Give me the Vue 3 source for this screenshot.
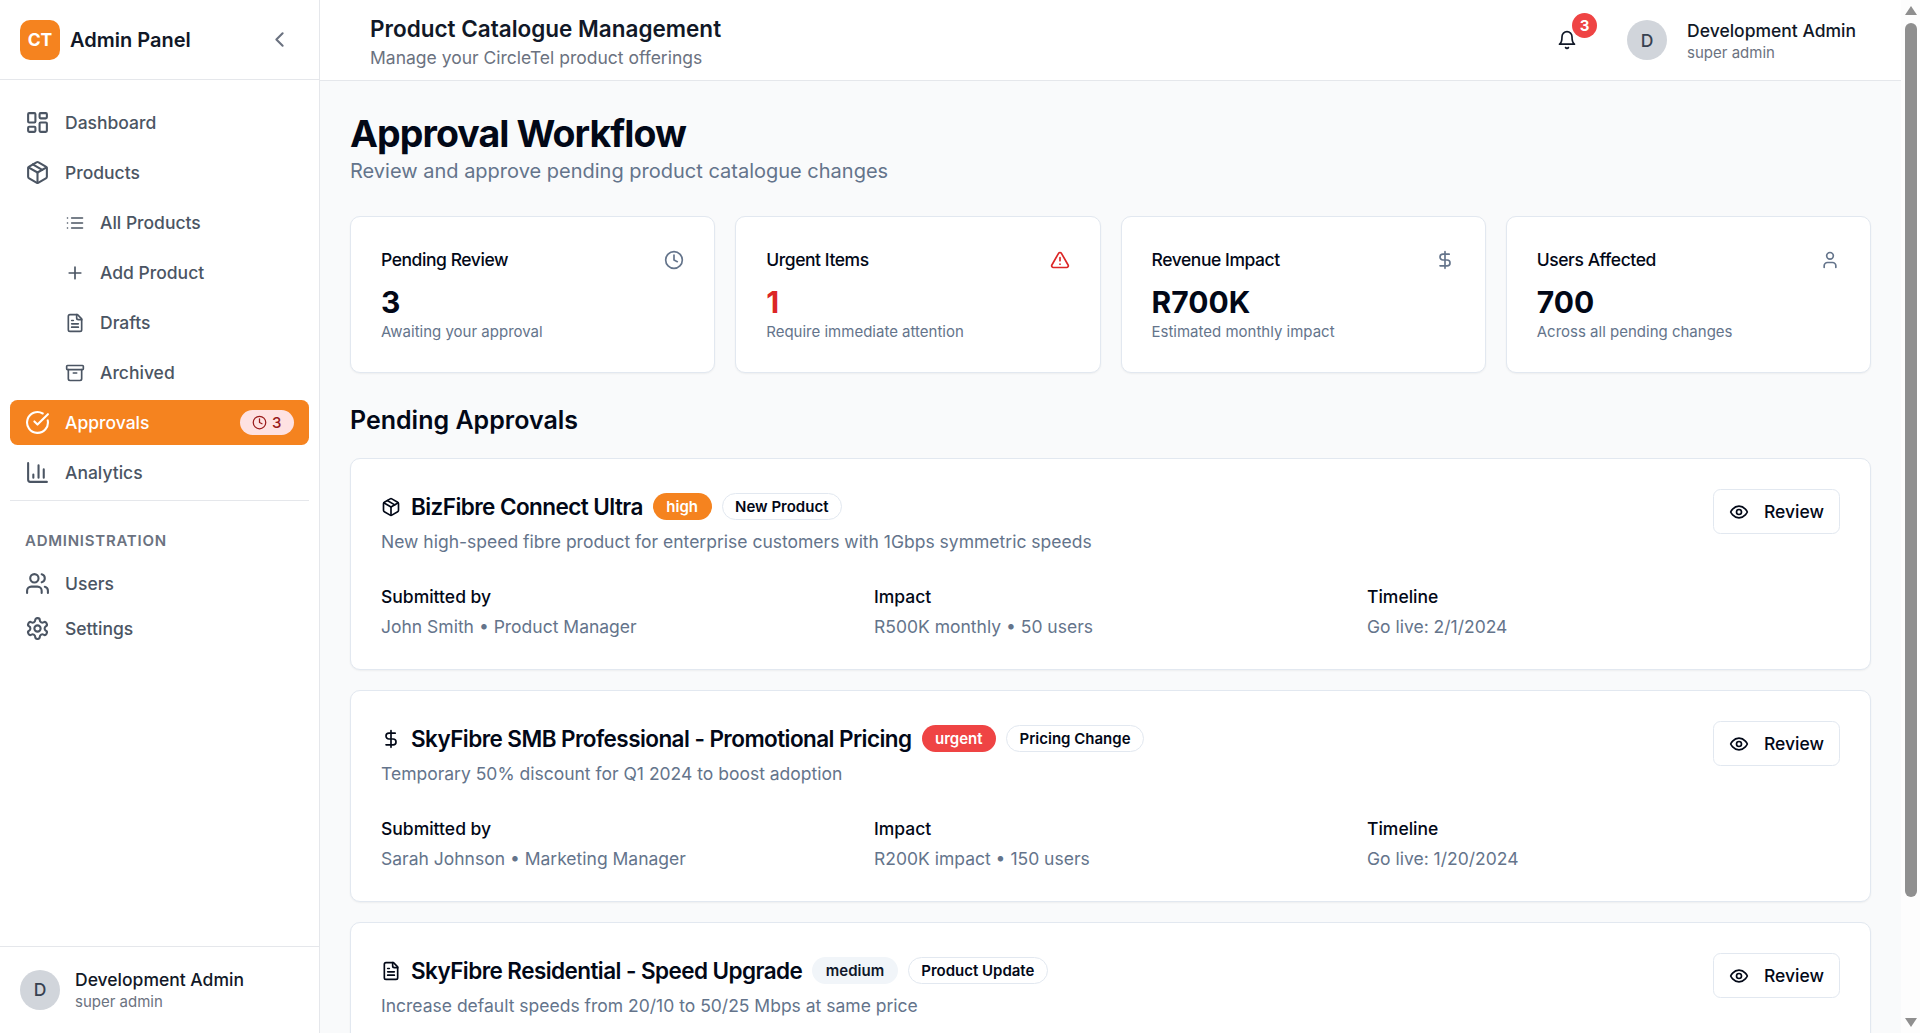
<script setup>
import { h } from 'vue'

const ICONS = {
  dashboard: '<rect x="3" y="3" width="7" height="9" rx="1"/><rect x="14" y="3" width="7" height="5" rx="1"/><rect x="14" y="12" width="7" height="9" rx="1"/><rect x="3" y="16" width="7" height="5" rx="1"/>',
  package: '<path d="m7.5 4.27 9 5.15"/><path d="M21 8a2 2 0 0 0-1-1.73l-7-4a2 2 0 0 0-2 0l-7 4A2 2 0 0 0 3 8v8a2 2 0 0 0 1 1.73l7 4a2 2 0 0 0 2 0l7-4A2 2 0 0 0 21 16Z"/><path d="m3.3 7 8.7 5 8.7-5"/><path d="M12 22V12"/>',
  list: '<path d="M3 12h.01M3 18h.01M3 6h.01M8 12h13M8 18h13M8 6h13"/>',
  plus: '<path d="M5 12h14M12 5v14"/>',
  file: '<path d="M15 2H6a2 2 0 0 0-2 2v16a2 2 0 0 0 2 2h12a2 2 0 0 0 2-2V7Z"/><path d="M14 2v4a2 2 0 0 0 2 2h4"/><path d="M10 9H8M16 13H8M16 17H8"/>',
  archive: '<rect x="2" y="3" width="20" height="5" rx="1"/><path d="M4 8v11a2 2 0 0 0 2 2h12a2 2 0 0 0 2-2V8"/><path d="M10 12h4"/>',
  check: '<path d="M21.801 10A10 10 0 1 1 17 3.335"/><path d="m9 11 3 3L22 4"/>',
  chart: '<path d="M3 3v16a2 2 0 0 0 2 2h16"/><path d="M18 17V9M13 17V5M8 17v-3"/>',
  users: '<path d="M16 21v-2a4 4 0 0 0-4-4H6a4 4 0 0 0-4 4v2"/><circle cx="9" cy="7" r="4"/><path d="M22 21v-2a4 4 0 0 0-3-3.87"/><path d="M16 3.13a4 4 0 0 1 0 7.75"/>',
  settings: '<path d="M12.22 2h-.44a2 2 0 0 0-2 2v.18a2 2 0 0 1-1 1.73l-.43.25a2 2 0 0 1-2 0l-.15-.08a2 2 0 0 0-2.73.73l-.22.38a2 2 0 0 0 .73 2.73l.15.1a2 2 0 0 1 1 1.72v.51a2 2 0 0 1-1 1.74l-.15.09a2 2 0 0 0-.73 2.73l.22.38a2 2 0 0 0 2.73.73l.15-.08a2 2 0 0 1 2 0l.43.25a2 2 0 0 1 1 1.73V20a2 2 0 0 0 2 2h.44a2 2 0 0 0 2-2v-.18a2 2 0 0 1 1-1.73l.43-.25a2 2 0 0 1 2 0l.15.08a2 2 0 0 0 2.73-.73l.22-.39a2 2 0 0 0-.73-2.73l-.15-.08a2 2 0 0 1-1-1.74v-.5a2 2 0 0 1 1-1.74l.15-.09a2 2 0 0 0 .73-2.73l-.22-.38a2 2 0 0 0-2.73-.73l-.15.08a2 2 0 0 1-2 0l-.43-.25a2 2 0 0 1-1-1.73V4a2 2 0 0 0-2-2z"/><circle cx="12" cy="12" r="3"/>',
  clock: '<circle cx="12" cy="12" r="10"/><path d="M12 6v6l4 2"/>',
  alert: '<path d="m21.73 18-8-14a2 2 0 0 0-3.48 0l-8 14A2 2 0 0 0 4 21h16a2 2 0 0 0 1.73-3"/><path d="M12 9v4M12 17h.01"/>',
  dollar: '<path d="M12 2v20"/><path d="M17 5H9.5a3.5 3.5 0 0 0 0 7h5a3.5 3.5 0 0 1 0 7H6"/>',
  user: '<path d="M19 21v-2a4 4 0 0 0-4-4H9a4 4 0 0 0-4 4v2"/><circle cx="12" cy="7" r="4"/>',
  eye: '<path d="M2 12s3-7 10-7 10 7 10 7-3 7-10 7-10-7-10-7Z"/><circle cx="12" cy="12" r="3"/>',
  bell: '<path d="M6 8a6 6 0 0 1 12 0c0 7 3 9 3 9H3s3-2 3-9"/><path d="M10.3 21a1.94 1.94 0 0 0 3.4 0"/>',
  chevron: '<path d="m15 18-6-6 6-6"/>'
}

const Icon = (props) =>
  h('svg', {
    width: props.size || 20,
    height: props.size || 20,
    viewBox: '0 0 24 24',
    fill: 'none',
    stroke: props.color || 'currentColor',
    'stroke-width': 2,
    'stroke-linecap': 'round',
    'stroke-linejoin': 'round',
    style: 'flex:none;display:block',
    innerHTML: ICONS[props.name]
  })
Icon.props = ['name', 'size', 'color']

const navMain = [
  { label: 'Dashboard', icon: 'dashboard' },
  { label: 'Products', icon: 'package' },
  { label: 'All Products', icon: 'list', sub: true },
  { label: 'Add Product', icon: 'plus', sub: true },
  { label: 'Drafts', icon: 'file', sub: true },
  { label: 'Archived', icon: 'archive', sub: true },
  { label: 'Approvals', icon: 'check', active: true, badge: '3' },
  { label: 'Analytics', icon: 'chart' }
]
const navAdmin = [
  { label: 'Users', icon: 'users' },
  { label: 'Settings', icon: 'settings' }
]
const stats = [
  { label: 'Pending Review', value: '3', sub: 'Awaiting your approval', icon: 'clock', color: '#64748b' },
  { label: 'Urgent Items', value: '1', sub: 'Require immediate attention', icon: 'alert', color: '#dc2626', red: true },
  { label: 'Revenue Impact', value: 'R700K', sub: 'Estimated monthly impact', icon: 'dollar', color: '#64748b' },
  { label: 'Users Affected', value: '700', sub: 'Across all pending changes', icon: 'user', color: '#64748b' }
]
const approvals = [
  {
    icon: 'package', title: 'BizFibre Connect Ultra', priority: 'high', type: 'New Product',
    desc: 'New high-speed fibre product for enterprise customers with 1Gbps symmetric speeds',
    by: 'John Smith • Product Manager', impact: 'R500K monthly • 50 users', timeline: 'Go live: 2/1/2024'
  },
  {
    icon: 'dollar', title: 'SkyFibre SMB Professional - Promotional Pricing', priority: 'urgent', type: 'Pricing Change',
    desc: 'Temporary 50% discount for Q1 2024 to boost adoption',
    by: 'Sarah Johnson • Marketing Manager', impact: 'R200K impact • 150 users', timeline: 'Go live: 1/20/2024'
  },
  {
    icon: 'file', title: 'SkyFibre Residential - Speed Upgrade', priority: 'medium', type: 'Product Update',
    desc: 'Increase default speeds from 20/10 to 50/25 Mbps at same price'
  }
]
</script>

<template>
  <div class="app">
    <aside class="sidebar">
      <div class="brand">
        <div class="logo">CT</div>
        <span class="brand-name">Admin Panel</span>
        <span class="collapse"><Icon name="chevron" :size="25" /></span>
      </div>
      <nav class="nav">
        <div class="nav-group">
          <a
            v-for="item in navMain"
            :key="item.label"
            class="nav-item"
            :class="{ sub: item.sub, active: item.active }"
          >
            <Icon :name="item.icon" :size="item.sub ? 20 : 25" />
            <span class="nav-label">{{ item.label }}</span>
            <span v-if="item.badge" class="nav-badge"><Icon name="clock" :size="15" />{{ item.badge }}</span>
          </a>
        </div>
        <div class="nav-admin">
          <div class="nav-heading">Administration</div>
          <a v-for="item in navAdmin" :key="item.label" class="nav-item">
            <Icon :name="item.icon" :size="25" />
            <span class="nav-label">{{ item.label }}</span>
          </a>
        </div>
      </nav>
      <div class="side-user">
        <div class="avatar">D</div>
        <div class="who">
          <div class="who-name">Development Admin</div>
          <div class="who-role">super admin</div>
        </div>
      </div>
    </aside>

    <div class="right">
      <header class="topbar">
        <div class="top-titles">
          <div class="top-title">Product Catalogue Management</div>
          <div class="top-sub">Manage your CircleTel product offerings</div>
        </div>
        <div class="top-actions">
          <div class="bell">
            <Icon name="bell" :size="20" />
            <span class="bell-badge">3</span>
          </div>
          <div class="avatar">D</div>
          <div class="who">
            <div class="who-name">Development Admin</div>
            <div class="who-role">super admin</div>
          </div>
        </div>
      </header>

      <main class="main">
        <h1 class="page-title">Approval Workflow</h1>
        <p class="page-sub">Review and approve pending product catalogue changes</p>

        <section class="stats">
          <div v-for="s in stats" :key="s.label" class="card stat">
            <div class="stat-head">
              <span class="stat-label">{{ s.label }}</span>
              <Icon :name="s.icon" :size="20" :color="s.color" />
            </div>
            <div class="stat-value" :class="{ red: s.red }">{{ s.value }}</div>
            <div class="stat-sub">{{ s.sub }}</div>
          </div>
        </section>

        <h2 class="section-title">Pending Approvals</h2>

        <section class="list">
          <article v-for="a in approvals" :key="a.title" class="card approval">
            <div class="approval-top">
              <div>
                <div class="approval-title-row">
                  <Icon :name="a.icon" :size="20" />
                  <h3 class="approval-title">{{ a.title }}</h3>
                  <span class="pill" :class="a.priority">{{ a.priority }}</span>
                  <span class="pill outline">{{ a.type }}</span>
                </div>
                <p class="approval-desc">{{ a.desc }}</p>
              </div>
              <button class="review"><Icon name="eye" :size="20" />Review</button>
            </div>
            <div v-if="a.by" class="meta">
              <div>
                <div class="meta-label">Submitted by</div>
                <div class="meta-value">{{ a.by }}</div>
              </div>
              <div>
                <div class="meta-label">Impact</div>
                <div class="meta-value">{{ a.impact }}</div>
              </div>
              <div>
                <div class="meta-label">Timeline</div>
                <div class="meta-value">{{ a.timeline }}</div>
              </div>
            </div>
          </article>
        </section>
      </main>
    </div>

    <div class="scrollbar">
      <span class="arrow up"></span>
      <div class="track"><div class="thumb"></div></div>
      <span class="arrow down"></span>
    </div>
  </div>
</template>

<style>
html, body { margin: 0; height: 100%; overflow: hidden; }
</style>

<style scoped>
* { box-sizing: border-box; }
.app {
  display: flex;
  height: 1033px;
  overflow: hidden;
  background: #f9fafb;
  font-family: Inter, "Liberation Sans", sans-serif;
  color: #020817;
}

/* Sidebar */
.sidebar {
  width: 320px;
  flex: none;
  display: flex;
  flex-direction: column;
  background: #fff;
  border-right: 1px solid #e5e7eb;
}
.brand {
  height: 80px;
  flex: none;
  display: flex;
  align-items: center;
  padding: 0 27px 0 20px;
  border-bottom: 1px solid #e5e7eb;
}
.logo {
  width: 40px;
  height: 40px;
  border-radius: 10px;
  background: #f5831f;
  color: #fff;
  font-size: 17.5px;
  font-weight: 700;
  display: flex;
  align-items: center;
  justify-content: center;
  flex: none;
}
.brand-name {
  margin-left: 10px;
  font-size: 20px;
  font-weight: 600;
  color: #111827;
  flex: 1;
}
.collapse { color: #6b7280; }
.nav { flex: 1; padding: 20px 10px 0; }
.nav-group {
  display: flex;
  flex-direction: column;
  gap: 5px;
  padding-bottom: 5px;
  border-bottom: 1px solid #e5e7eb;
}
.nav-item {
  height: 45px;
  display: flex;
  align-items: center;
  gap: 15px;
  padding: 0 15px;
  border-radius: 7.5px;
  font-size: 17.5px;
  font-weight: 500;
  color: #4b5563;
}
.nav-item.sub { padding-left: 55px; }
.nav-item.active { background: #f5831f; color: #fff; }
.nav-label { flex: 1; }
.nav-badge {
  display: flex;
  align-items: center;
  gap: 5px;
  height: 25px;
  padding: 0 12.5px;
  border-radius: 999px;
  background: #fee2e2;
  color: #991b1b;
  font-size: 15px;
}
.nav-admin { padding-top: 30px; }
.nav-heading {
  height: 20px;
  line-height: 20px;
  margin-bottom: 10px;
  padding-left: 15px;
  font-size: 15px;
  font-weight: 600;
  letter-spacing: 0.05em;
  text-transform: uppercase;
  color: #6b7280;
}
.side-user {
  flex: none;
  display: flex;
  align-items: center;
  gap: 15px;
  padding: 20px 20px 21px;
  border-top: 1px solid #e5e7eb;
}
.avatar {
  width: 40px;
  height: 40px;
  border-radius: 50%;
  background: #d1d5db;
  color: #374151;
  font-size: 17.5px;
  font-weight: 500;
  display: flex;
  align-items: center;
  justify-content: center;
  flex: none;
}
.who-name { font-size: 17.5px; line-height: 25px; font-weight: 500; color: #111827; }
.who-role { font-size: 15px; line-height: 20px; color: #6b7280; }

/* Right column */
.right { flex: 1; min-width: 0; display: flex; flex-direction: column; }
.topbar {
  height: 81px;
  flex: none;
  display: flex;
  align-items: center;
  justify-content: space-between;
  padding: 0 45px 0 50px;
  background: #fff;
  border-bottom: 1px solid #e5e7eb;
}
.top-titles { padding-top: 1px; }
.top-title { font-size: 22.5px; line-height: 35px; font-weight: 600; color: #111827; }
.top-sub { margin-top: -1px; font-size: 17.5px; line-height: 25px; color: #6b7280; }
.top-actions { display: flex; align-items: center; gap: 20px; }
.bell {
  position: relative;
  width: 20px;
  height: 20px;
  margin-right: 30px;
  color: #111827;
}
.bell-badge {
  position: absolute;
  left: 15px;
  top: -17px;
  width: 25px;
  height: 25px;
  border-radius: 50%;
  background: #ef4444;
  color: #fff;
  font-size: 15px;
  font-weight: 700;
  display: flex;
  align-items: center;
  justify-content: center;
}
.main { flex: 1; min-height: 0; overflow: hidden; padding: 30px; }
.page-title {
  margin: 0;
  font-size: 37.5px;
  line-height: 45px;
  font-weight: 700;
  letter-spacing: -0.025em;
}
.page-sub { margin: 0 0 30px; font-size: 20px; line-height: 30px; color: #64748b; }
.stats { display: grid; grid-template-columns: repeat(4, 1fr); gap: 20px; margin-bottom: 30px; }
.card {
  background: #fff;
  border: 1px solid #e2e8f0;
  border-radius: 10px;
  box-shadow: 0 1px 2px rgba(0, 0, 0, 0.05);
}
.stat { padding: 30px; }
.stat-head {
  height: 25px;
  margin-bottom: 10px;
  display: flex;
  align-items: center;
  justify-content: space-between;
}
.stat-label { font-size: 17.5px; font-weight: 500; letter-spacing: -0.025em; }
.stat-value { font-size: 30px; line-height: 40px; font-weight: 700; }
.stat-value.red { color: #dc2626; }
.stat-sub { font-size: 15px; line-height: 20px; color: #64748b; }
.section-title { margin: 0 0 20px; font-size: 25px; line-height: 35px; font-weight: 600; }
.list { display: flex; flex-direction: column; gap: 20px; }
.approval { padding: 30px; flex: none; }
.approval-top { display: flex; justify-content: space-between; align-items: flex-start; margin-bottom: 30px; }
.approval-title-row { display: flex; align-items: center; gap: 10px; height: 35px; }
.approval-title { margin: 0; font-size: 22.5px; line-height: 35px; font-weight: 600; letter-spacing: -0.025em; }
.approval-desc { margin: 5px 0 0; font-size: 17.5px; line-height: 25px; color: #64748b; }
.pill {
  height: 27px;
  display: inline-flex;
  align-items: center;
  padding: 0 12.5px;
  border-radius: 999px;
  border: 1px solid transparent;
  font-size: 15px;
  font-weight: 600;
}
.pill.high { background: #f5831f; color: #fff; }
.pill.urgent { background: #ef4444; color: #fff; }
.pill.medium { background: #f1f5f9; color: #0f172a; }
.pill.outline { border-color: #e2e8f0; color: #020817; }
.review {
  width: 127px;
  height: 45px;
  flex: none;
  display: flex;
  align-items: center;
  justify-content: center;
  gap: 15px;
  padding: 0;
  background: #fff;
  border: 1px solid #e2e8f0;
  border-radius: 7.5px;
  font: 500 17.5px Inter, "Liberation Sans", sans-serif;
  color: #020817;
}
.meta { display: grid; grid-template-columns: repeat(3, 1fr); gap: 20px; }
.meta-label { font-size: 17.5px; line-height: 25px; font-weight: 500; }
.meta-value { margin-top: 5px; font-size: 17.5px; line-height: 25px; color: #64748b; }

/* Scrollbar */
.scrollbar {
  width: 19px;
  flex: none;
  display: flex;
  flex-direction: column;
  align-items: center;
  background: #fdfdfd;
}
.track { flex: 1; width: 100%; }
.thumb { width: 12px; height: 874px; margin: 8px auto 0; border-radius: 6px; background: #8f8f8f; }
.arrow { width: 0; height: 0; border-left: 6.5px solid transparent; border-right: 6.5px solid transparent; flex: none; }
.arrow.up { border-bottom: 9px solid #8f8f8f; margin-top: 6px; }
.arrow.down { border-top: 9px solid #8f8f8f; margin-bottom: 6px; }
</style>
